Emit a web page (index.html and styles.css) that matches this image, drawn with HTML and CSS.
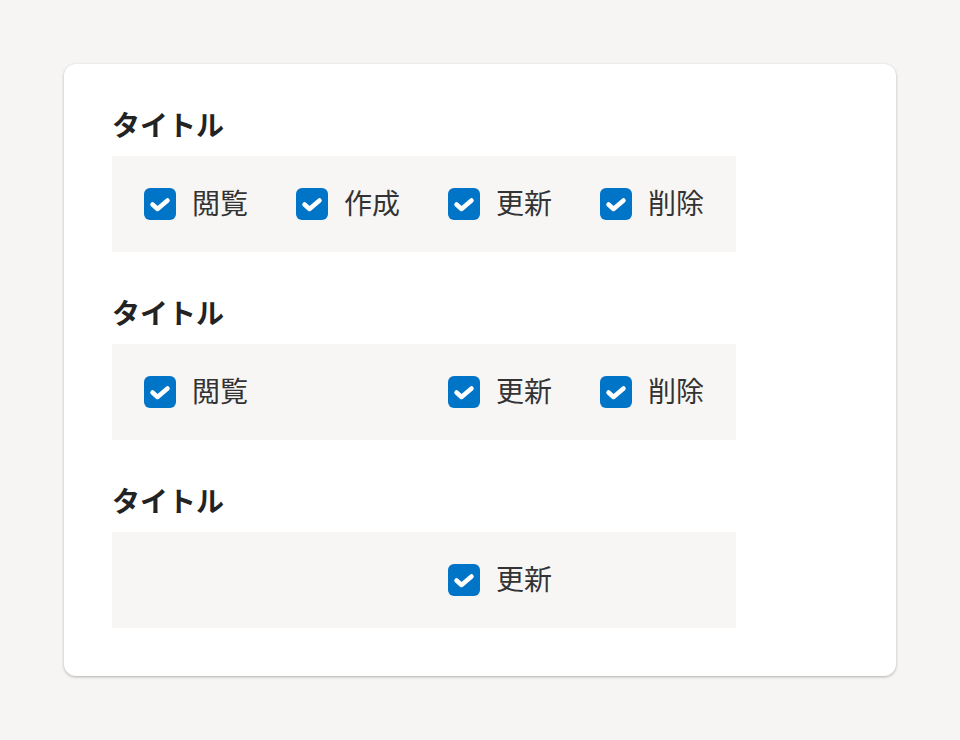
FILE: index.html
```html
<!DOCTYPE html>
<html lang="ja">
<head>
<meta charset="utf-8">
<link rel="stylesheet" href="styles.css">
</head>
<body>
<div class="card">
  <section class="group">
    <h2 class="title">タイトル</h2>
    <div class="box">
      <label class="item"><span class="cb"><svg viewBox="0 0 32 32"><path d="M8.5 16.5 L13.5 21 L23.5 12.5"/></svg></span><span class="lbl">閲覧</span></label>
      <label class="item"><span class="cb"><svg viewBox="0 0 32 32"><path d="M8.5 16.5 L13.5 21 L23.5 12.5"/></svg></span><span class="lbl">作成</span></label>
      <label class="item"><span class="cb"><svg viewBox="0 0 32 32"><path d="M8.5 16.5 L13.5 21 L23.5 12.5"/></svg></span><span class="lbl">更新</span></label>
      <label class="item"><span class="cb"><svg viewBox="0 0 32 32"><path d="M8.5 16.5 L13.5 21 L23.5 12.5"/></svg></span><span class="lbl">削除</span></label>
    </div>
  </section>
  <section class="group">
    <h2 class="title">タイトル</h2>
    <div class="box">
      <label class="item"><span class="cb"><svg viewBox="0 0 32 32"><path d="M8.5 16.5 L13.5 21 L23.5 12.5"/></svg></span><span class="lbl">閲覧</span></label>
      <label class="item hidden"><span class="cb"><svg viewBox="0 0 32 32"><path d="M8.5 16.5 L13.5 21 L23.5 12.5"/></svg></span><span class="lbl">作成</span></label>
      <label class="item"><span class="cb"><svg viewBox="0 0 32 32"><path d="M8.5 16.5 L13.5 21 L23.5 12.5"/></svg></span><span class="lbl">更新</span></label>
      <label class="item"><span class="cb"><svg viewBox="0 0 32 32"><path d="M8.5 16.5 L13.5 21 L23.5 12.5"/></svg></span><span class="lbl">削除</span></label>
    </div>
  </section>
  <section class="group">
    <h2 class="title">タイトル</h2>
    <div class="box">
      <label class="item hidden"><span class="cb"><svg viewBox="0 0 32 32"><path d="M8.5 16.5 L13.5 21 L23.5 12.5"/></svg></span><span class="lbl">閲覧</span></label>
      <label class="item hidden"><span class="cb"><svg viewBox="0 0 32 32"><path d="M8.5 16.5 L13.5 21 L23.5 12.5"/></svg></span><span class="lbl">作成</span></label>
      <label class="item"><span class="cb"><svg viewBox="0 0 32 32"><path d="M8.5 16.5 L13.5 21 L23.5 12.5"/></svg></span><span class="lbl">更新</span></label>
      <label class="item hidden"><span class="cb"><svg viewBox="0 0 32 32"><path d="M8.5 16.5 L13.5 21 L23.5 12.5"/></svg></span><span class="lbl">削除</span></label>
    </div>
  </section>
</div>
</body>
</html>
```
FILE: styles.css
```css
html, body {
  margin: 0;
  padding: 0;
  background: #f6f5f3;
}
body {
  padding: 64px;
  font-family: "Noto Sans CJK JP", "Noto Sans", sans-serif;
  color: #2b2b2b;
}
.card {
  width: 832px;
  box-sizing: border-box;
  background: #ffffff;
  border-radius: 12px;
  box-shadow: 0 1px 3px rgba(0, 0, 0, 0.28);
  padding: 48px;
  display: flex;
  flex-direction: column;
  gap: 48px;
}
.group {
  display: flex;
  flex-direction: column;
  gap: 20px;
}
.title {
  margin: 0;
  font-size: 28px;
  line-height: 24px;
  font-weight: 700;
  color: #232323;
}
.box {
  width: 624px;
  height: 96px;
  box-sizing: border-box;
  background: #f7f6f5;
  padding: 0 32px;
  display: grid;
  grid-template-columns: repeat(4, 104px);
  column-gap: 48px;
  align-items: center;
}
.item {
  display: flex;
  align-items: center;
  gap: 16px;
  white-space: nowrap;
}
.hidden {
  visibility: hidden;
}
.cb {
  flex: none;
  width: 32px;
  height: 32px;
  border-radius: 6px;
  background: #0074c6;
  display: flex;
}
.cb svg {
  width: 32px;
  height: 32px;
  fill: none;
  stroke: #ffffff;
  stroke-width: 4.5;
  stroke-linecap: round;
  stroke-linejoin: round;
}
.lbl {
  font-size: 28px;
  line-height: 28px;
  padding-bottom: 4px;
  color: #333333;
}
```
